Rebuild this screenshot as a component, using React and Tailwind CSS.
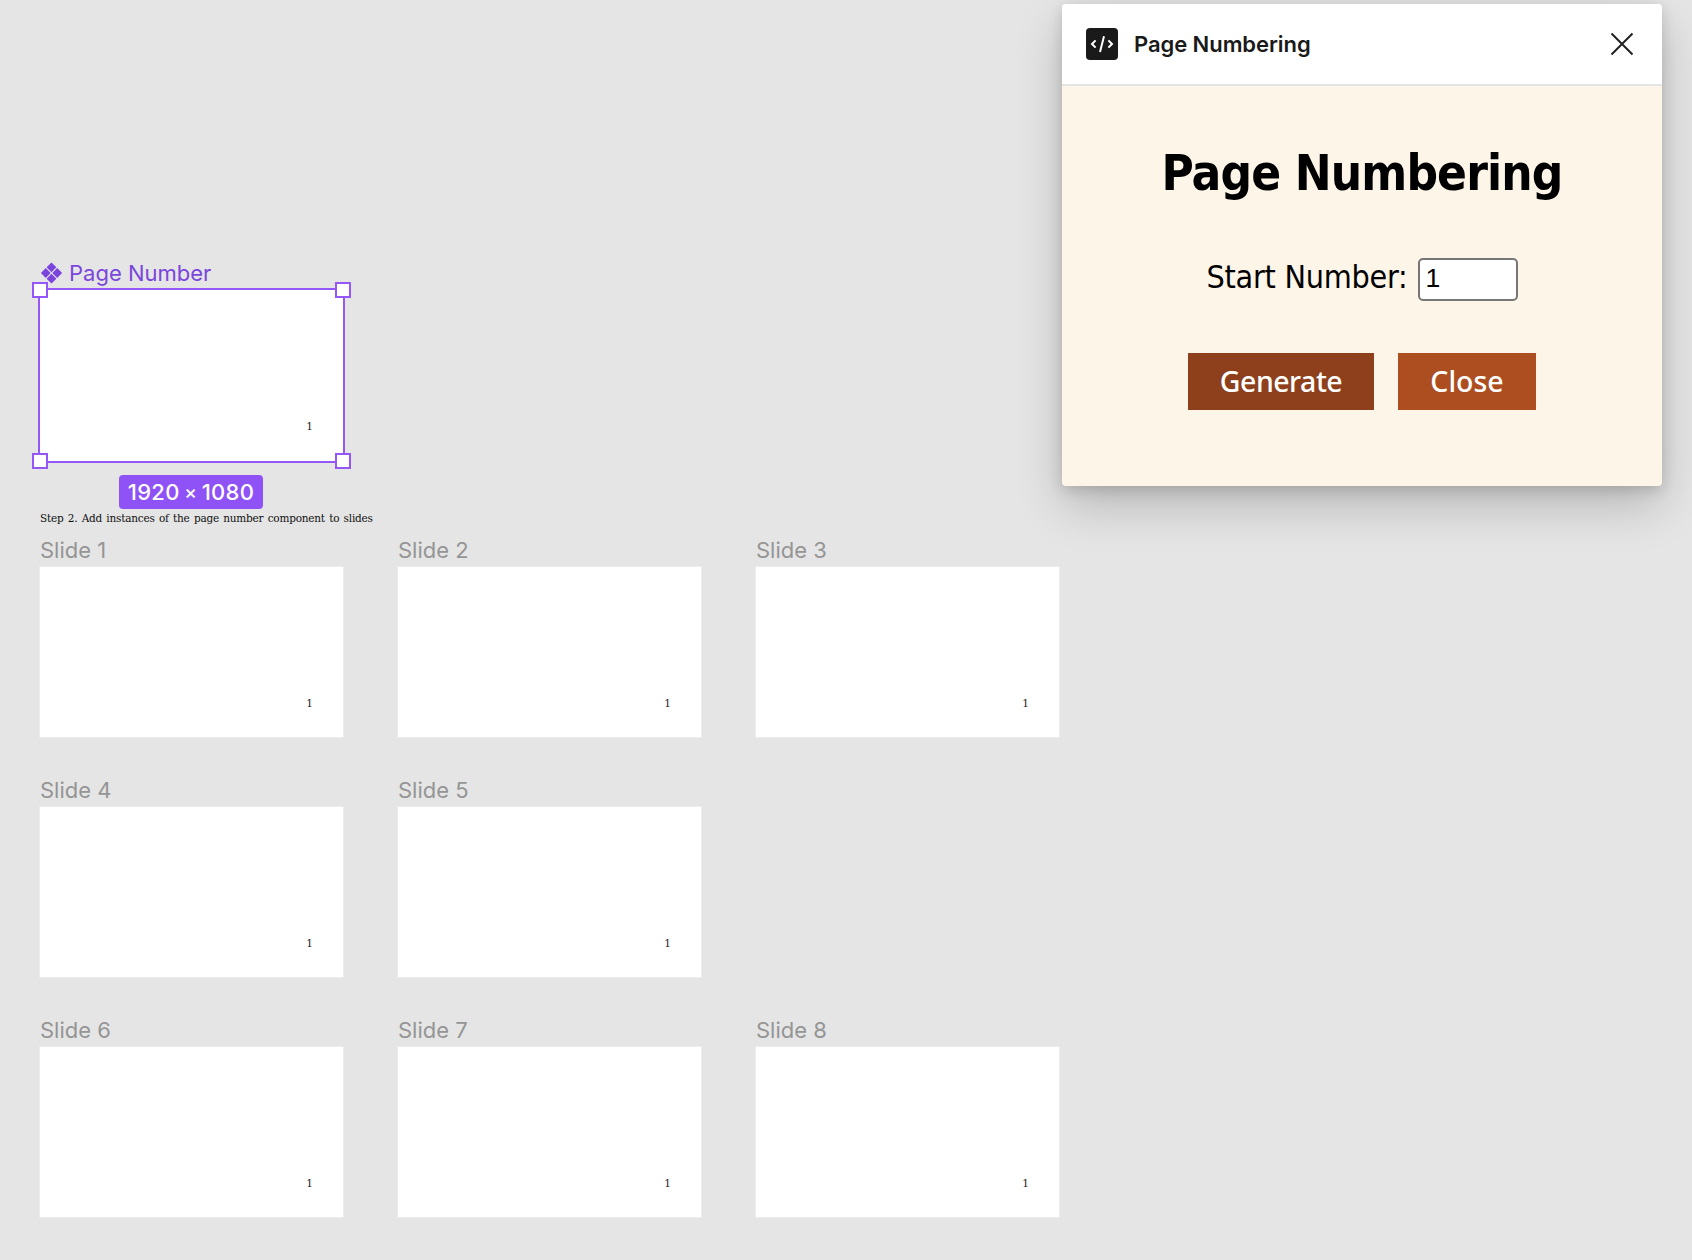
const slideRows = [
  ["Slide 1", "Slide 2", "Slide 3"],
  ["Slide 4", "Slide 5"],
  ["Slide 6", "Slide 7", "Slide 8"],
];

function PageMark() {
  return (
    <span className="mt-[130px] mr-[30px] h-3 font-['DejaVu_Serif'] text-[10.5px] leading-3 text-[#222]">
      1
    </span>
  );
}

function Slide({ name }) {
  return (
    <div className="w-[303px]">
      <div className="mb-1 h-[26px] text-[22px] leading-[26px] text-[#959595]">{name}</div>
      <div className="flex h-[170px] items-start justify-end bg-white shadow-[0_0_0_1px_#ececec]">
        <PageMark />
      </div>
    </div>
  );
}

function Handle({ place }) {
  return <span className={`absolute size-4 border-2 border-[#9657f8] bg-white ${place}`} />;
}

function ComponentFrame() {
  return (
    <div className="w-[303px]">
      <div className="flex h-[26px] items-center text-[22px] leading-[26px] text-[#7b45dd]">
        <svg width="23" height="23" viewBox="0 0 23 23" fill="currentColor" className="mr-[6px]">
          <path d="M11.5.4l4.9 4.9-4.9 4.9-4.9-4.9zM11.5 11.8l4.9 4.9-4.9 4.9-4.9-4.9zM5.8 6.1l4.9 4.9-4.9 4.9L.9 11zM17.2 6.1l4.9 4.9-4.9 4.9-4.9-4.9z" />
        </svg>
        <span>Page Number</span>
      </div>
      <div className="relative mt-1 flex h-[171px] items-start justify-end bg-white outline-2 outline-[#9657f8]">
        <PageMark />
        <Handle place="-left-2 -top-2" />
        <Handle place="-right-2 -top-2" />
        <Handle place="-left-2 -bottom-2" />
        <Handle place="-right-2 -bottom-2" />
      </div>
      <div className="mt-[14px] ml-[79px] flex h-[34px] w-36 items-center justify-center rounded bg-[#8f52f7] pt-px text-[22px] font-medium tracking-[0.3px] whitespace-pre text-white">
        1920<span className="mx-[4.5px] text-[19px] leading-6">×</span>1080
      </div>
    </div>
  );
}

function PluginWindow() {
  return (
    <section className="absolute top-1 left-[1062px] h-[482px] w-[600px] overflow-hidden rounded-[4px] bg-[#fef5e9] shadow-[0_4px_14px_rgba(0,0,0,0.15),0_20px_48px_rgba(0,0,0,0.2)]">
      <header className="flex h-[82px] items-center border-b-2 border-[#e5e5e5] bg-white pr-[28px] pl-6">
        <svg width="32" height="32" viewBox="0 0 32 32" fill="none">
          <rect width="32" height="32" rx="4" fill="#1a1a1a" />
          <path
            d="M9.6 12.4l-3.6 3.6 3.6 3.6M22.4 12.4l3.6 3.6-3.6 3.6M18 8.3l-4 15.6"
            stroke="#fff"
            strokeWidth="2"
          />
        </svg>
        <h1 className="ml-4 text-[22px] leading-8 font-semibold tracking-[-0.07px] text-[#1a1a1a]">
          Page Numbering
        </h1>
        <svg width="24" height="24" viewBox="0 0 24 24" className="ml-auto">
          <path d="M1.5 1.5l21 21M22.5 1.5l-21 21" stroke="#222" strokeWidth="2" />
        </svg>
      </header>
      <div className="flex flex-col items-center text-black">
        <h2 className="mt-[59px] h-[57px] font-['DejaVu_Sans_Condensed','DejaVu_Sans'] text-[49px] leading-[58px] font-bold tracking-[-0.85px] whitespace-nowrap [font-stretch:condensed]">
          Page Numbering
        </h2>
        <div className="mt-14 flex h-[43px] items-center">
          <label className="mr-[10px] pb-[5px] font-['DejaVu_Sans_Condensed','DejaVu_Sans'] text-[32px] leading-[38px] tracking-[-0.25px] whitespace-nowrap [font-stretch:condensed]">
            Start Number:
          </label>
          <input
            defaultValue="1"
            className="h-[43px] w-[100px] rounded-[5px] border-2 border-[#767676] bg-white px-[6px] py-0 pb-[3px] font-['Liberation_Sans'] text-[26.67px]"
          />
        </div>
        <div className="mt-[52px] flex gap-6 font-['Noto_Sans'] text-[28.5px] font-medium text-white">
          <button className="h-[57px] w-[186px] bg-[#8d401b] tracking-[-0.5px]">Generate</button>
          <button className="h-[57px] w-[138px] bg-[#ac4e20]">Close</button>
        </div>
      </div>
    </section>
  );
}

export default function App() {
  return (
    <main className="relative h-[1260px] w-[1692px] overflow-hidden bg-[#e5e5e5] pt-[260px] pl-10 font-['Inter',sans-serif]">
      <ComponentFrame />
      <p className="mt-px mb-[11px] h-4 font-['DejaVu_Serif'] text-[10.5px] leading-4 tracking-[-0.22px] [word-spacing:1.2px] whitespace-nowrap text-[#111]">
        Step 2. Add instances of the page number component to slides
      </p>
      <div className="flex flex-col gap-10">
        {slideRows.map((row) => (
          <div key={row[0]} className="flex gap-[55px]">
            {row.map((name) => (
              <Slide key={name} name={name} />
            ))}
          </div>
        ))}
      </div>
      <PluginWindow />
    </main>
  );
}
